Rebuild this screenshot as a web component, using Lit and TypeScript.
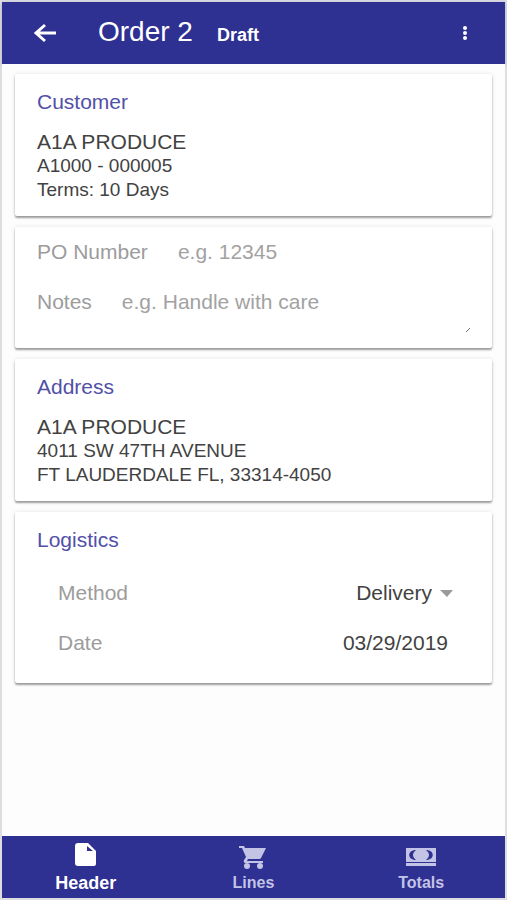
import { LitElement, html, css, svg } from "lit";
import { customElement, state } from "lit/decorators.js";
import { classMap } from "lit/directives/class-map.js";

const tabs = [
  {
    id: "header",
    label: "Header",
    icon: svg`<path d="M7 2h10l8 8v13a2 2 0 0 1-2 2H7a3 3 0 0 1-3-3V5a3 3 0 0 1 3-3zm9 3v5h6z" fill-rule="evenodd"/>`,
  },
  {
    id: "lines",
    label: "Lines",
    icon: svg`<path d="M1 5h5l1 2h21l-5 10a2 2 0 0 1-2 1H10l-1 2h16v2H8a2 2 0 0 1-2-3l2-3-4-9H1z"/><circle cx="9" cy="25" r="3"/><circle cx="22" cy="25" r="3"/>`,
  },
  {
    id: "totals",
    label: "Totals",
    icon: svg`<path d="M0 7h30v14H0zM10 9C1 9 1 19 10 19C6 16 6 12 10 9zM20 9C24 12 24 16 20 19C29 19 29 9 20 9z" fill-rule="evenodd"/><path d="M0 22h30v3H0z"/>`,
  },
];

@customElement("app-root")
export class AppRoot extends LitElement {
  @state() private active = "header";

  static styles = css`
    :host {
      display: flex;
      flex-direction: column;
      box-sizing: border-box;
      min-height: 100vh;
      padding: 2px;
      background: #dedee2;
      font-family: "Liberation Sans", Arial, sans-serif;
      font-size: 21px;
      line-height: 24px;
      color: #424242;
    }
    * {
      box-sizing: border-box;
    }
    button,
    input,
    select,
    textarea {
      margin: 0;
      padding: 0;
      border: 0;
      background: none;
      font: inherit;
      color: inherit;
      outline-offset: 2px;
    }
    button,
    select {
      cursor: pointer;
    }
    svg {
      display: block;
    }
    .bar {
      display: flex;
      align-items: center;
      height: 62px;
      padding: 0 32px 0 30px;
      background: #2e3092;
      color: #fff;
      box-shadow: 0 1px 4px rgba(46, 48, 146, 0.3);
    }
    .title {
      flex: 1;
      display: flex;
      align-items: baseline;
      gap: 24px;
      margin: 0 0 0 40px;
      font-size: 28px;
      line-height: 32px;
      font-weight: 400;
    }
    .status {
      font-size: 18px;
      font-weight: 700;
    }
    .content {
      flex: 1;
      display: flex;
      flex-direction: column;
      gap: 11px;
      padding: 10px 13px;
      background: #fdfdfd;
    }
    .card {
      padding: 16px 22px 14px;
      border-radius: 2px;
      background: #fff;
      box-shadow: 0 2px 2px rgba(0, 0, 0, 0.36), 0 0 4px rgba(0, 0, 0, 0.1);
    }
    .heading {
      margin: 0 0 16px;
      font-size: 21px;
      font-weight: 400;
      color: #5250a8;
    }
    .name,
    .line {
      margin: 0;
    }
    .line {
      font-size: 19px;
    }
    .form {
      padding-top: 13px;
      padding-bottom: 16px;
      display: flex;
      flex-direction: column;
      gap: 26px;
    }
    .field {
      display: flex;
      gap: 30px;
      color: #9c9c9c;
    }
    .entry {
      flex: 1;
      min-width: 0;
      color: #424242;
    }
    .entry::placeholder {
      color: #a2a2a2;
      opacity: 1;
    }
    .notes {
      position: relative;
    }
    .notes .entry {
      height: 42px;
      resize: none;
    }
    .grip {
      position: absolute;
      right: 0;
      bottom: 0;
    }
    .logistics {
      padding-bottom: 28px;
    }
    .rows {
      display: flex;
      flex-direction: column;
      gap: 26px;
      padding: 13px 17px 0 21px;
    }
    .row {
      display: flex;
      justify-content: space-between;
      align-items: center;
      color: #9c9c9c;
    }
    .pick {
      display: flex;
      align-items: center;
      gap: 8px;
    }
    .method {
      appearance: none;
      text-align-last: right;
      color: #424242;
    }
    .date {
      width: 150px;
      margin-right: 5px;
      text-align: right;
      color: #424242;
    }
    .nav {
      display: grid;
      grid-template-columns: repeat(3, 1fr);
      height: 62px;
      background: #2e3092;
    }
    .tab {
      display: flex;
      flex-direction: column;
      align-items: center;
      padding-top: 5px;
      font-size: 16px;
      line-height: 24px;
      font-weight: 700;
      color: #c3c3e6;
    }
    .tab.active {
      font-size: 18px;
      color: #fff;
    }
  `;

  render() {
    return html`
      <header class="bar">
        <button aria-label="Back">
          <svg width="26" height="24" viewBox="0 0 26 24" fill="none" stroke="#fff" stroke-width="3">
            <path d="M24 12H4M13 4L4 12l9 8" />
          </svg>
        </button>
        <h1 class="title">Order 2 <span class="status">Draft</span></h1>
        <button aria-label="More options">
          <svg width="16" height="24" viewBox="0 0 16 24" fill="#fff">
            <circle cx="8" cy="7" r="2" /><circle cx="8" cy="12" r="2" /><circle cx="8" cy="17" r="2" />
          </svg>
        </button>
      </header>

      <main class="content">
        <section class="card">
          <h2 class="heading">Customer</h2>
          <p class="name">A1A PRODUCE</p>
          <p class="line">A1000 - 000005</p>
          <p class="line">Terms: 10 Days</p>
        </section>

        <section class="card form">
          <div class="field">
            <label for="po">PO Number</label>
            <input class="entry" id="po" placeholder="e.g. 12345" />
          </div>
          <div class="field notes">
            <label for="notes">Notes</label>
            <textarea class="entry" id="notes" rows="1" placeholder="e.g. Handle with care"></textarea>
            <svg class="grip" width="4" height="4" viewBox="0 0 4 4" stroke="#777"><path d="M0 4L4 0" /></svg>
          </div>
        </section>

        <section class="card">
          <h2 class="heading">Address</h2>
          <p class="name">A1A PRODUCE</p>
          <p class="line">4011 SW 47TH AVENUE</p>
          <p class="line">FT LAUDERDALE FL, 33314-4050</p>
        </section>

        <section class="card logistics">
          <h2 class="heading">Logistics</h2>
          <div class="rows">
            <div class="row">
              <label for="method">Method</label>
              <span class="pick">
                <select class="method" id="method"><option>Delivery</option></select>
                <svg width="13" height="7" viewBox="0 0 13 7" fill="#9a9a9a"><path d="M0 0h13L7 7z" /></svg>
              </span>
            </div>
            <div class="row">
              <label for="date">Date</label>
              <input class="date" id="date" value="03/29/2019" />
            </div>
          </div>
        </section>
      </main>

      <nav class="nav">
        ${tabs.map(
          (t) => html`<button
            class=${classMap({ tab: true, active: t.id === this.active })}
            @click=${() => (this.active = t.id)}
          >
            <svg width="30" height="30" viewBox="0 0 30 30" fill="currentColor">${t.icon}</svg>
            ${t.label}
          </button>`
        )}
      </nav>
    `;
  }
}
